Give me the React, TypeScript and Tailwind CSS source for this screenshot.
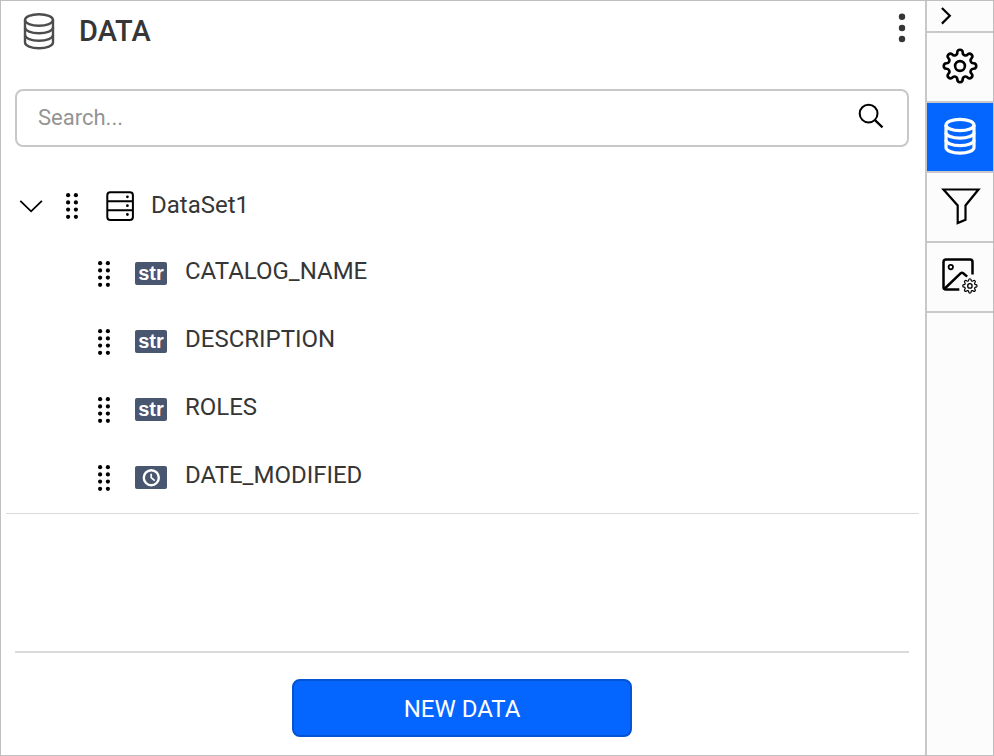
import React from "react";

// Outline of an eight-toothed gear built from alternating round arcs.
function gearPath(cx: number, cy: number, base: number, tooth: number, valley: number): string {
  const points: string[] = [];
  for (let i = 0; i <= 16; i++) {
    const angle = ((i - 0.5) * Math.PI) / 8;
    const x = (cx + base * Math.cos(angle)).toFixed(2);
    const y = (cy + base * Math.sin(angle)).toFixed(2);
    if (i === 0) points.push(`M${x} ${y}`);
    else if (i % 2 === 1) points.push(`A${tooth} ${tooth} 0 0 1 ${x} ${y}`);
    else points.push(`A${valley} ${valley} 0 0 0 ${x} ${y}`);
  }
  return points.join("") + "Z";
}

function DatabaseIcon({ className, strokeWidth }: { className: string; strokeWidth: number }) {
  return (
    <svg className={className} viewBox="0 0 32 38" fill="none" stroke="currentColor" strokeWidth={strokeWidth}>
      <ellipse cx="16" cy="8" rx="14" ry="5.7" />
      <path d="M2 8V30.5C2 33.7 8.3 36.2 16 36.2S30 33.7 30 30.5V8" />
      <path d="M2 15.5C2 18.7 8.3 21.2 16 21.2S30 18.7 30 15.5" />
      <path d="M2 23C2 26.2 8.3 28.7 16 28.7S30 26.2 30 23" />
    </svg>
  );
}

function DragHandle() {
  return (
    <svg className="h-7 w-4 shrink-0 text-black" viewBox="0 0 16 28" fill="currentColor">
      {[3.2, 10.4, 17.6, 24.8].map((y) => (
        <React.Fragment key={y}>
          <circle cx="4.1" cy={y} r="2.1" />
          <circle cx="11.9" cy={y} r="2.1" />
        </React.Fragment>
      ))}
    </svg>
  );
}

function TypeBadge({ type }: { type: "str" | "date" }) {
  return (
    <span className="flex h-[23px] w-8 shrink-0 items-center justify-center rounded-[2px] bg-[#48566f] text-white">
      {type === "str" ? (
        <span className="font-['Liberation_Sans',Arial,sans-serif] text-[20px] leading-[23px] font-bold">str</span>
      ) : (
        <svg className="h-[19px] w-[19px]" viewBox="0 0 19 19" fill="none" stroke="currentColor">
          <circle cx="9.3" cy="9.7" r="7.5" strokeWidth="2.4" />
          <path d="M9.2 5.7V9.7L12.7 12.7" strokeWidth="1.7" />
        </svg>
      )}
    </span>
  );
}

const fields: { name: string; type: "str" | "date" }[] = [
  { name: "CATALOG_NAME", type: "str" },
  { name: "DESCRIPTION", type: "str" },
  { name: "ROLES", type: "str" },
  { name: "DATE_MODIFIED", type: "date" },
];

function Sidebar() {
  const cell = "flex h-[70px] items-center justify-center border-b-2 border-[#c8c8c8] pb-0.5";
  return (
    <nav className="w-[68px] shrink-0 border-l-2 border-[#c8c8c8] bg-[#fcfcfc] text-black">
      <button className="flex h-8 w-full items-center border-b-2 border-[#c8c8c8] pl-3">
        <svg className="h-5 w-4" viewBox="0 0 16 20" fill="none" stroke="currentColor" strokeWidth="2.2">
          <path d="M2.9 2L10.8 9.8L2.9 17.6" />
        </svg>
      </button>
      <div className={cell}>
        <svg className="h-[38px] w-[38px]" viewBox="0 0 38 38" fill="none" stroke="currentColor" strokeWidth="2.6">
          <path d={gearPath(19, 19, 14, 2.74, 2.85)} />
          <circle cx="19" cy="19" r="4.9" />
        </svg>
      </div>
      <div className="flex h-[70px] items-center justify-center border-b-2 border-[#c8c8c8] bg-[#0565ff] pb-0.5 text-white">
        <DatabaseIcon className="h-[38px] w-8" strokeWidth={3.2} />
      </div>
      <div className={cell}>
        <svg className="h-10 w-[42px]" viewBox="0 0 42 40" fill="none" stroke="currentColor" strokeWidth="2.2">
          <path d="M4.5 3.5H39.5L26.5 19.5V33.8L18.7 37V19.5Z" />
        </svg>
      </div>
      <div className={cell}>
        <svg className="h-10 w-[42px]" viewBox="0 0 42 40" fill="none" stroke="currentColor">
          <path d="M20.3 33.5H7Q4.5 33.5 4.5 31V6Q4.5 3.5 7 3.5H31Q33.5 3.5 33.5 6V18.5" strokeWidth="2.5" />
          <circle cx="11.8" cy="11.1" r="2.2" strokeWidth="1.8" />
          <path d="M5.8 32.5L21.8 17.2Q23 16.2 24.2 17.2L28.2 20.6" strokeWidth="2.5" />
          <path d={gearPath(30.9, 29.9, 6.2, 1.22, 1.25)} strokeWidth="1.2" />
          <circle cx="30.9" cy="29.9" r="2.2" strokeWidth="1.3" />
        </svg>
      </div>
    </nav>
  );
}

export default function App() {
  return (
    <div className="flex h-[756px] w-[994px] overflow-hidden border border-[#bfbfbf] bg-white font-[Roboto,sans-serif] text-[#363636]">
      <main className="flex min-w-0 flex-1 flex-col">
        <header className="flex h-[88px] items-start pt-[11px] pl-[22px]">
          <DatabaseIcon className="h-[38px] w-8 text-[#4d4d4d]" strokeWidth={2.4} />
          <h1 className="mt-px ml-6 h-9 text-[29px] leading-9 font-medium">DATA</h1>
          <svg className="mr-[11px] ml-auto h-8 w-6" viewBox="0 0 24 32" fill="currentColor">
            <circle cx="12" cy="4.8" r="3.2" />
            <circle cx="12" cy="16" r="3.2" />
            <circle cx="12" cy="27" r="3.2" />
          </svg>
        </header>

        <div className="mr-4 ml-[14px] flex h-[58px] shrink-0 items-center rounded-lg border-2 border-[#c8c8c8] pr-[22px] pl-[21px]">
          <input
            className="min-w-0 flex-1 text-[22px] leading-7 outline-none placeholder:text-[#949494]"
            placeholder="Search..."
          />
          <svg className="mb-1 h-7 w-7 text-black" viewBox="0 0 28 28" fill="none" stroke="currentColor">
            <circle cx="11.6" cy="11.6" r="8.9" strokeWidth="2" />
            <path d="M18 18.1L25.5 25.4" strokeWidth="2.2" />
          </svg>
        </div>

        <section className="mr-[6px] ml-[5px] h-[367px] shrink-0 border-b border-[#dadada] pt-[26px]">
          <div className="flex h-[66px] items-center">
            <svg className="ml-[11px] h-6 w-7 text-black" viewBox="0 0 28 24" fill="none" stroke="currentColor" strokeWidth="1.8">
              <path d="M3.3 6.8L14.1 17.3L24.9 6.8" />
            </svg>
            <span className="ml-[14px] flex w-[47px] items-center pl-[5px]">
              <DragHandle />
            </span>
            <svg className="h-8 w-7 text-black" viewBox="0 0 28 32" fill="none" stroke="currentColor" strokeWidth="2">
              <rect x="1.3" y="2.3" width="25.6" height="27.6" rx="3" />
              <path d="M1 11.2H27M1 20.3H27" />
              <g fill="currentColor" stroke="none">
                <circle cx="21.4" cy="6.8" r="1.4" />
                <circle cx="21.4" cy="15.7" r="1.4" />
                <circle cx="21.4" cy="24.5" r="1.4" />
              </g>
            </svg>
            <span className="mb-0.5 ml-[17px] text-[24px] leading-8">DataSet1</span>
          </div>
          <ul>
            {fields.map((field) => (
              <li key={field.name} className="flex h-[68px] items-center pl-[90px]">
                <span className="pt-px">
                  <DragHandle />
                </span>
                <span className="ml-[23px] flex">
                  <TypeBadge type={field.type} />
                </span>
                <span className="mb-1 ml-[18px] text-[24px] leading-8">{field.name}</span>
              </li>
            ))}
          </ul>
        </section>

        <footer className="mt-auto mr-4 ml-[14px] flex h-[104px] shrink-0 justify-center border-t-2 border-[#dadada] pt-[26px]">
          <button className="h-[58px] w-[340px] rounded-lg border-2 border-[#0453d1] bg-[#0565ff] pt-px text-[24px] text-white">
            NEW DATA
          </button>
        </footer>
      </main>
      <Sidebar />
    </div>
  );
}
